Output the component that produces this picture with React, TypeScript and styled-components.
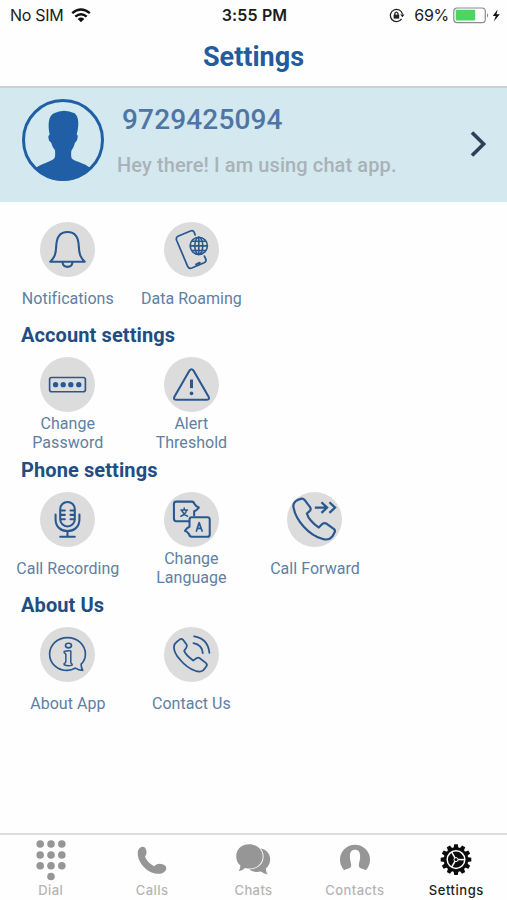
import React from 'react';
import styled, { createGlobalStyle } from 'styled-components';

const GlobalStyle = createGlobalStyle`
  * { box-sizing: border-box; }
  body { margin: 0; background: #fefefe; }
  svg { display: block; flex: none; }
`;

const Screen = styled.div`
  width: 507px;
  height: 900px;
  display: flex;
  flex-direction: column;
  overflow: hidden;
  background: #fefefe;
  font-family: Roboto, sans-serif;
`;

const StatusBar = styled.div`
  height: 30px;
  display: grid;
  grid-template-columns: 1fr auto 1fr;
  align-items: center;
  padding: 0 6px 0 10px;
  font: 400 16px/30px Inter, sans-serif;
  color: #1c1c1c;
`;

const StatusGroup = styled.div<{ $end?: boolean }>`
  display: flex;
  align-items: center;
  gap: ${(p) => (p.$end ? '0' : '8px')};
  justify-content: ${(p) => (p.$end ? 'flex-end' : 'flex-start')};
  letter-spacing: -0.3px;
`;

const Clock = styled.div`
  font-weight: 600;
  letter-spacing: 0.15px;
  padding-right: 2px;
`;

const Battery = styled.span`
  margin: 0 4px 0 9px;
`;

const Header = styled.header`
  height: 58px;
  border-bottom: 2px solid #c7d2d4;
  display: flex;
  align-items: center;
  justify-content: center;
  padding-bottom: 3px;
`;

const Title = styled.h1`
  margin: 0;
  font-size: 27px;
  line-height: 32px;
  font-weight: 700;
  color: #235b9c;
`;

const Profile = styled.section`
  height: 114px;
  background: #d3e9ef;
  display: flex;
  align-items: flex-start;
  padding: 11px 20px 0 22px;
`;

const ProfileText = styled.div`
  flex: 1;
  padding: 4px 0 0 13px;
`;

const PhoneNumber = styled.div`
  padding-left: 5px;
  font-size: 28px;
  line-height: 34px;
  font-weight: 500;
  letter-spacing: 0.15px;
  color: #4f75a5;
`;

const StatusLine = styled.div`
  margin-top: 16px;
  font-size: 20px;
  line-height: 24px;
  font-weight: 500;
  letter-spacing: 0.1px;
  color: #a9b2b7;
`;

const ChevronBox = styled.div`
  padding-top: 31px;
`;

const Content = styled.main`
  flex: 1;
  padding: 20px 6px 0;
`;

const SectionTitle = styled.h2`
  margin: 0 0 4px;
  padding-left: 15px;
  font-size: 20px;
  line-height: 36px;
  font-weight: 700;
  letter-spacing: 0.1px;
  color: #214d83;
`;

const TileRow = styled.div`
  display: flex;
`;

const Tile = styled.div`
  width: 123.6px;
  display: flex;
  flex-direction: column;
  align-items: center;
  gap: 2px;
`;

const IconDisc = styled.div`
  width: 55px;
  height: 55px;
  border-radius: 50%;
  background: #dcdcdd;
`;

const TileLabel = styled.div`
  height: 38px;
  display: flex;
  align-items: center;
  text-align: center;
  white-space: pre-line;
  font-size: 16px;
  line-height: 19px;
  letter-spacing: 0.03px;
  color: #5f80a2;
`;

const TabBar = styled.nav`
  height: 67px;
  border-top: 2px solid #dedede;
  display: grid;
  grid-template-columns: repeat(5, 1fr);
`;

const Tab = styled.div<{ $active?: boolean }>`
  display: flex;
  flex-direction: column;
  align-items: center;
  color: ${(p) => (p.$active ? '#0c0c0c' : '#969696')};
`;

const TabIcon = styled.div`
  height: 46px;
  padding-top: 4px;
`;

const TabLabel = styled.div<{ $active?: boolean }>`
  font: 500 13px/18px Inter, sans-serif;
  letter-spacing: ${(p) => (p.$active ? '0.55px' : '0.4px')};
  color: ${(p) => (p.$active ? '#1d1d1d' : '#b5b5b5')};
`;

const LineSvg = ({ children }: { children: React.ReactNode }) => (
  <svg width="55" height="55" viewBox="0 0 166 166" fill="none" stroke="#28588f" strokeWidth="6.2" strokeLinecap="round" strokeLinejoin="round">
    {children}
  </svg>
);

const BellIcon = () => (
  <LineSvg>
    <path d="M31 120H135C122 107 118 97 117 72C116 45 104 30 83 30S50 45 49 72C48 97 44 107 31 120Z" />
    <path d="M68 122C70 140 96 140 98 122" />
  </LineSvg>
);

const RoamingIcon = () => (
  <LineSvg>
    <path d="M94 39L91 31Q88 24 80 27L42 43Q35 47 38 55L71 133Q75 142 84 139L121 123Q129 119 126 112L122 103" strokeWidth="5.2" />
    <path d="M97 128L108 123" />
    <g strokeWidth="5">
      <circle cx="105" cy="72" r="26" />
      <ellipse cx="105" cy="72" rx="12" ry="26" />
      <path d="M105 46V98M80 72H130M84 58H126M84 86H126" />
    </g>
  </LineSvg>
);

const PasswordIcon = () => (
  <LineSvg>
    <rect x="29" y="62" width="108" height="43" rx="6" strokeWidth="5" />
    <g fill="#28588f" stroke="none">
      {[47, 70, 93, 117].map((x) => <circle key={x} cx={x} cy="83.5" r="8" />)}
    </g>
  </LineSvg>
);

const AlertIcon = () => (
  <LineSvg>
    <path d="M77 41Q83 33 89 41L135 121Q138 129 130 129H36Q28 129 31 121Z" />
    <path d="M83 68V94" strokeWidth="9" strokeLinecap="butt" />
    <circle cx="83" cy="110" r="5.5" fill="#28588f" stroke="none" />
  </LineSvg>
);

const MicIcon = () => (
  <LineSvg>
    <rect x="61" y="30" width="44" height="74" rx="22" />
    <path d="M47 68V82C47 106 64 118 83 118S119 106 119 82V68M83 118V135M61 135H105M63 56H75M63 69H75M63 82H75M103 56H92M103 69H92M103 82H92" />
  </LineSvg>
);

const LanguageIcon = () => (
  <LineSvg>
    <path d="M76 88H37Q30 88 30 81V36Q30 29 37 29H84Q90 29 91 35Q96 44 105 47Q98 56 91 58V71" />
    <path d="M84 76H131Q138 76 138 83V128Q138 135 131 135H84Q77 135 76 128Q70 119 63 117Q70 108 77 105V83Q77 76 84 76Z" />
    <path d="M51 54H71M61 48V53M68 56Q64 69 51 73M54 57Q60 69 71 73" strokeWidth="4.5" />
    <path d="M98 118L106 92L115 118M101 110H112" strokeWidth="5" />
  </LineSvg>
);

const ForwardIcon = () => (
  <LineSvg>
    <path d="M44 20Q49 19 53 24L69 45Q74 52 69 57L60 65Q63 76 72 86Q83 99 96 107L104 99Q111 91 120 96L142 112Q147 117 143 123L137 134Q127 147 108 142Q76 133 50 104Q23 74 19 42Q20 25 44 20Z" strokeWidth="6.6" />
    <path d="M84 47H119M104 31L121 47L104 63M128 31L145 47L128 63" strokeWidth="6.8" strokeLinecap="butt" strokeLinejoin="miter" />
  </LineSvg>
);

const InfoIcon = () => (
  <LineSvg>
    <path d="M129 131Q116 131 107 124Q95 131 83 131C53 131 29 110 29 82S53 32 83 32S137 54 137 82Q137 100 124 112Q124 123 129 131Z" strokeWidth="5" />
    <ellipse cx="86" cy="56" rx="9" ry="7" strokeWidth="5" />
    <path d="M73 74Q84 70 93 72V107Q94 111 97 112V115Q85 120 73 114V110Q78 109 78 104V83Q77 79 73 78Z" strokeWidth="4.5" />
  </LineSvg>
);

const ContactIcon = () => (
  <LineSvg>
    <path d="M47 38Q53 33 58 39L68 53Q71 58 67 63L61 72Q65 84 88 101L98 94Q104 90 109 95L127 109Q132 114 127 120L119 130Q110 138 94 132Q70 124 48 98Q30 78 30 60Q30 51 38 45Z" strokeWidth="5.4" />
    <path d="M91 28Q133 35 137 78M89 49Q115 54 117 79" strokeWidth="5.4" />
  </LineSvg>
);

const Avatar = () => (
  <svg width="82" height="82" viewBox="0 0 246 246">
    <circle cx="123" cy="123" r="118.5" fill="none" stroke="#205fa5" strokeWidth="9" />
    <path d="M42 206C60 193 82 189 96 179Q101 174 99 154Q91 145 87 130Q80 127 79 113Q79 108 83 107C77 78 79 50 96 43Q125 28 158 43C172 54 171 82 164 107Q169 108 167 115Q165 128 159 131Q155 147 148 155Q146 174 150 179C164 189 187 192 204 206C183 232 155 246 123 246S62 232 42 206Z" fill="#205fa5" />
  </svg>
);

const WifiIcon = () => (
  <svg width="20" height="15" viewBox="0 0 20 15" fill="none" stroke="#111" strokeWidth="2.5">
    <path d="M1.2 5.1Q10-2.2 18.8 5.1M4.3 8.6Q10 3.8 15.7 8.6" />
    <path d="M6.7 11Q10 8.1 13.3 11L10 14.3Z" fill="#111" stroke="none" />
  </svg>
);

const RotationLockIcon = () => (
  <svg width="16" height="15" viewBox="0 0 16 15" fill="none" stroke="#222" strokeWidth="1.3">
    <path d="M12.6 10.8A6.1 6.1 0 1 1 13.5 6.4" />
    <path d="M11.2 6.4H15.6L13.4 9.2Z" fill="#222" stroke="none" />
    <rect x="4.6" y="6.7" width="5.6" height="3.9" fill="#222" stroke="none" />
    <path d="M5.8 7V5.5Q7.4 2.9 9 5.5V7" />
  </svg>
);

const BatteryIcon = () => (
  <svg width="48" height="17" viewBox="0 0 48 17">
    <rect x="0.8" y="1" width="31.5" height="14.6" rx="3.4" fill="#fff" stroke="#8c8c8c" strokeWidth="1.2" />
    <rect x="2.7" y="2.8" width="19.5" height="10.8" rx="1" fill="#4bd75f" />
    <path d="M34 6Q36.4 8.3 34 10.6Z" fill="#8c8c8c" />
    <path d="M44.6 2.4L39.8 9.1H42.8L40.7 14.4L46.8 7.3H43.5Z" fill="#111" />
  </svg>
);

const DialIcon = () => (
  <svg width="32" height="42" viewBox="0 0 32 42" fill="currentColor">
    {[5, 16, 26.7].map((y) => [5.2, 16, 26.8].map((x) => <circle key={`${x}-${y}`} cx={x} cy={y} r="3.8" />))}
    <circle cx="16" cy="37.5" r="3.8" />
  </svg>
);

const CallsIcon = () => (
  <svg width="32" height="42" viewBox="0 0 32 42" fill="currentColor">
    <path d="M3.5 9.2Q7.8 6 10 10.3Q11.5 14.3 9 17.8Q11.7 24.1 18.1 27.3Q21.6 23.8 26.6 25.3Q31.4 26.8 30 30.9Q26.7 35.9 19 34.5Q12.2 33.1 7.1 27.2Q.9 20.2 1.8 12.5Q2.1 10.5 3.5 9.2Z" />
  </svg>
);

const ChatsIcon = () => (
  <svg width="36" height="42" viewBox="0 0 36 42" fill="currentColor">
    <path d="M22 9.2C29.5 8.6 35.2 13.6 35.2 20Q35.2 25.8 30.8 29.6Q31 33 32.6 35.4Q28.6 34.8 25.8 32.6Q19.6 34.2 14.2 30.6Z" />
    <path d="M14.3 5.3C22 5.3 27.7 10.6 27.7 17.4S22 29.5 14.3 29.5Q12.1 29.5 10 29Q7.6 31.6 3.8 32.3Q5.4 29.5 5.4 26.6C-2 21 .1 5.3 14.3 5.3Z" stroke="#fefefe" strokeWidth="1.8" paintOrder="stroke" />
  </svg>
);

const ContactsIcon = () => (
  <svg width="32" height="42" viewBox="0 0 32 42" fill="currentColor">
    <path d="M5.2 31.2A15 15 0 1 1 26.8 31.2C24 29.6 19.8 29.8 19.8 26.6C19.8 24 20.6 23 21 19.5C21.5 14 20.2 10.8 16 10.8S10.5 14 11 19.5C11.4 23 12.2 24 12.2 26.6C12.2 29.8 8 29.6 5.2 31.2Z" />
    <path d="M17 35.3Q22 34.6 25.4 31.3Q22.4 34.2 17 35.3Z" />
  </svg>
);

const GearIcon = () => (
  <svg width="32" height="42" viewBox="-16 -20.6 32 42" fill="currentColor">
    {Array.from({ length: 12 }, (_, i) => (
      <path key={i} d="M-2.5-11L-1.8-15.3H1.8L2.5-11Z" transform={`rotate(${i * 30})`} />
    ))}
    <circle r="12.3" />
    <circle r="8.8" fill="none" stroke="#fefefe" strokeWidth="1.5" />
    <g stroke="#fefefe" strokeWidth="1.5">
      <path d="M1.8 0H8.8" />
      <path d="M1.8 0H8.8" transform="rotate(120)" />
      <path d="M1.8 0H8.8" transform="rotate(240)" />
    </g>
    <circle r="2" fill="currentColor" stroke="#fefefe" strokeWidth="1" />
  </svg>
);

type TileData = { label: string; Icon: React.ComponentType };

const sections: { title?: string; tiles: TileData[] }[] = [
  { tiles: [{ label: 'Notifications', Icon: BellIcon }, { label: 'Data Roaming', Icon: RoamingIcon }] },
  { title: 'Account settings', tiles: [{ label: 'Change\nPassword', Icon: PasswordIcon }, { label: 'Alert\nThreshold', Icon: AlertIcon }] },
  { title: 'Phone settings', tiles: [{ label: 'Call Recording', Icon: MicIcon }, { label: 'Change\nLanguage', Icon: LanguageIcon }, { label: 'Call Forward', Icon: ForwardIcon }] },
  { title: 'About Us', tiles: [{ label: 'About App', Icon: InfoIcon }, { label: 'Contact Us', Icon: ContactIcon }] },
];

const tabs = [
  { label: 'Dial', Icon: DialIcon },
  { label: 'Calls', Icon: CallsIcon },
  { label: 'Chats', Icon: ChatsIcon },
  { label: 'Contacts', Icon: ContactsIcon },
  { label: 'Settings', Icon: GearIcon, active: true },
];

export default function App() {
  return (
    <Screen>
      <GlobalStyle />
      <StatusBar>
        <StatusGroup><span>No SIM</span><WifiIcon /></StatusGroup>
        <Clock>3:55 PM</Clock>
        <StatusGroup $end><RotationLockIcon /><Battery>69%</Battery><BatteryIcon /></StatusGroup>
      </StatusBar>
      <Header><Title>Settings</Title></Header>
      <Profile>
        <Avatar />
        <ProfileText>
          <PhoneNumber>9729425094</PhoneNumber>
          <StatusLine>Hey there! I am using chat app.</StatusLine>
        </ProfileText>
        <ChevronBox>
          <svg width="17" height="28" viewBox="0 0 17 28" fill="none" stroke="#2b4059" strokeWidth="3.6">
            <path d="M2 2.5L13.6 14L2 25.5" />
          </svg>
        </ChevronBox>
      </Profile>
      <Content>
        {sections.map(({ title, tiles }) => (
          <section key={title ?? 'general'}>
            {title && <SectionTitle>{title}</SectionTitle>}
            <TileRow>
              {tiles.map(({ label, Icon }) => (
                <Tile key={label}>
                  <IconDisc><Icon /></IconDisc>
                  <TileLabel>{label}</TileLabel>
                </Tile>
              ))}
            </TileRow>
          </section>
        ))}
      </Content>
      <TabBar>
        {tabs.map(({ label, Icon, active }) => (
          <Tab key={label} $active={active}>
            <TabIcon><Icon /></TabIcon>
            <TabLabel $active={active}>{label}</TabLabel>
          </Tab>
        ))}
      </TabBar>
    </Screen>
  );
}
